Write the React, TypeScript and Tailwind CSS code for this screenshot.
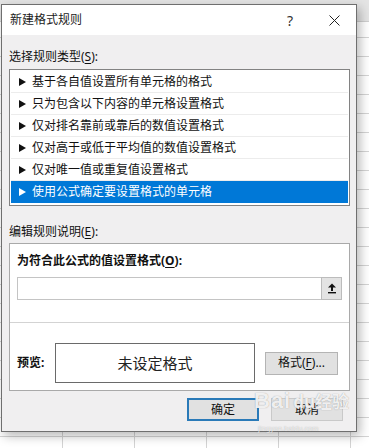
import { type ReactNode } from 'react'

const ruleTypes = [
  '基于各自值设置所有单元格的格式',
  '只为包含以下内容的单元格设置格式',
  '仅对排名靠前或靠后的数值设置格式',
  '仅对高于或低于平均值的数值设置格式',
  '仅对唯一值或重复值设置格式',
  '使用公式确定要设置格式的单元格',
]

const Key = ({ children }: { children: ReactNode }) => (
  <span className="underline underline-offset-2">{children}</span>
)

const Triangle = ({ light }: { light?: boolean }) => (
  <svg width="7" height="8" viewBox="0 0 7 8" className="shrink-0">
    <polygon points="0,0 7,4 0,8" fill={light ? '#ffffff' : '#111111'} />
  </svg>
)

export default function App() {
  return (
    <div className="relative w-[369px] h-[448px] overflow-hidden bg-white font-['Noto_Sans','Noto_Sans_CJK_SC',sans-serif] text-[12px] text-[#111]">
      {/* Spreadsheet behind the dialog */}
      <div className="flex flex-col h-full">
        <div className="h-[22px] bg-[#e4e4e4] border-b border-[#cfcfcf]" />
        <div className="flex-1 bg-[linear-gradient(to_right,#d4d4d4_1px,transparent_1px),linear-gradient(to_bottom,#d4d4d4_1px,transparent_1px)] bg-[length:72px_19px] bg-[position:62px_-4px]" />
      </div>

      {/* Dialog */}
      <div className="absolute left-[1px] top-[4px] w-[356px] h-[428px] flex flex-col border border-[#6f6f6f] bg-[#f0eff0] shadow-[3px_4px_10px_rgba(0,0,0,0.28)]">
        {/* Title bar */}
        <div className="h-[30px] shrink-0 flex items-center bg-white">
          <span className="pl-[8px] text-[12px] text-[#222]">新建格式规则</span>
          <div className="ml-auto flex h-full">
            <div className="w-[44px] flex items-center justify-center text-[14px] text-[#333]">?</div>
            <div className="w-[44px] flex items-center justify-center">
              <svg width="11" height="11" viewBox="0 0 11 11">
                <path d="M0.5 0.5 L10.5 10.5 M10.5 0.5 L0.5 10.5" stroke="#222" strokeWidth="1" />
              </svg>
            </div>
          </div>
        </div>

        {/* Rule type */}
        <div className="pl-[7px] pt-[14px] leading-[16px]">
          选择规则类型(<Key>S</Key>):
        </div>
        <div className="ml-[7px] mt-[4px] w-[341px] border border-[#828282] bg-white p-px pb-[2px]">
          {ruleTypes.map((t, i) => {
            const selected = i === ruleTypes.length - 1
            return (
              <div
                key={t}
                className={`h-[22px] flex items-center gap-[6px] pl-[8px] ${
                  selected ? 'bg-[#0078d7] text-white' : 'border-b border-[#ececec]'
                }`}
              >
                <Triangle light={selected} />
                <span>{t}</span>
              </div>
            )
          })}
        </div>

        {/* Rule description */}
        <div className="pl-[7px] mt-[18px] leading-[16px]">
          编辑规则说明(<Key>E</Key>):
        </div>
        <div className="ml-[7px] mt-[3px] w-[341px] h-[148px] border border-[#a9a9a9] bg-white flex flex-col">
          <div className="px-[7px] pt-[9px] font-bold leading-[16px]">
            为符合此公式的值设置格式(<Key>O</Key>):
          </div>
          <div className="mx-[7px] mt-[8px] flex h-[23px]">
            <div className="flex-1 border border-[#c4c4c4] border-r-0 bg-white" />
            <div className="w-[21px] border border-[#bcbcbc] bg-[#e3e3e3] flex items-center justify-center">
              <svg width="10" height="11" viewBox="0 0 10 11">
                <polygon points="5,0.5 9,4.5 1,4.5" fill="#111" />
                <rect x="4" y="4" width="2" height="4" fill="#111" />
                <rect x="1" y="9" width="8" height="1.4" fill="#111" />
              </svg>
            </div>
          </div>
          <div className="mt-[22px] border-t border-[#d3d3d3]" />
          <div className="flex items-center pl-[7px] pt-[20px]">
            <span className="w-[38px] font-bold">预览:</span>
            <div className="w-[200px] h-[40px] border border-[#6a6a6a] bg-white flex items-center justify-center text-[15px] text-[#222]">
              未设定格式
            </div>
            <button className="ml-[10px] w-[73px] h-[23px] border border-[#b4b4b4] bg-[#e1e1e1] text-[12px]">
              格式(<Key>F</Key>)...
            </button>
          </div>
        </div>

        {/* Footer buttons */}
        <div className="flex justify-end gap-[12px] pr-[13px] mt-[7px]">
          <button className="w-[72px] h-[23px] border-2 border-[#2a7ab8] bg-[#e1e1e1] text-[12px]">确定</button>
          <button className="w-[72px] h-[23px] border border-[#c9c9c9] bg-[#e1e1e1] text-[12px]">取消</button>
        </div>
      </div>

      {/* Watermark */}
      <div className="absolute left-[254px] top-[388px] flex items-end gap-[2px] text-white/85 [text-shadow:0_0_1px_rgba(120,120,120,0.8)] pointer-events-none">
        <span className="font-['Liberation_Sans',sans-serif] font-bold text-[22px] leading-[26px] tracking-[1px]">Bai</span>
        <span className="text-[17px] leading-[24px] font-bold">du经验</span>
      </div>
      <div className="absolute left-[258px] top-[424px] text-[7px] text-white/80 [text-shadow:0_0_1px_rgba(120,120,120,0.7)] pointer-events-none">
        jingyan.baidu.com
      </div>
    </div>
  )
}
